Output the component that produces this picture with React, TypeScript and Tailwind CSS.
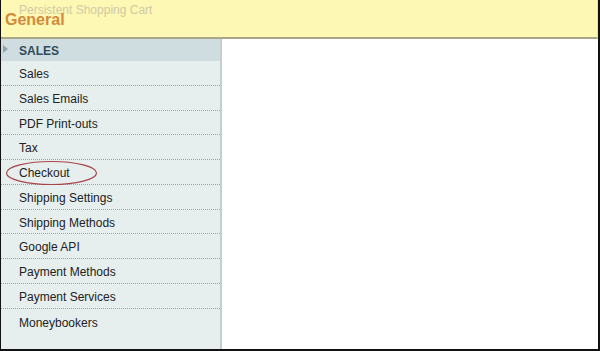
import React from 'react';

const items: [string, string][] = [
  ['Sales', 'h-[25px]'],
  ['Sales Emails', 'h-[25px]'],
  ['PDF Print-outs', 'h-[24px]'],
  ['Tax', 'h-[25px]'],
  ['Checkout', 'h-[25px]'],
  ['Shipping Settings', 'h-[25px]'],
  ['Shipping Methods', 'h-[24px]'],
  ['Google API', 'h-[25px]'],
  ['Payment Methods', 'h-[25px]'],
  ['Payment Services', 'h-[25px]'],
  ['Moneybookers', 'h-[25px]'],
];

export default function App() {
  return (
    <div className="w-[600px] h-[351px] overflow-hidden bg-white border-l border-r-2 border-b-2 border-l-[#111] border-r-[#111] border-b-[#111] flex flex-col text-[12px] text-[#222]" style={{ fontFamily: '"Liberation Sans", Arial, sans-serif' }}>
      <div className="relative h-[39px] shrink-0 bg-[#fdf8b3] border-b-2 border-[#a9a78a] border-r border-r-[#e8e3a8] pl-[4px] pt-[11px]">
        {/* faded title from the previous page, sitting behind "General" */}
        <span className="absolute left-[18px] top-[1px] text-[12px] text-[#cfcaa6]">Persistent Shopping Cart</span>
        <h1 className="relative text-[16px] leading-[18px] font-bold text-[#d48a3c]">General</h1>
      </div>
      <div className="flex flex-1 min-h-0">
        <div className="w-[221px] shrink-0 bg-[#e6eeee] border-r-2 border-[#c4cdd0]">
          <div className="h-[22px] bg-[#cfdde1] flex items-center gap-[11px] pl-[2px] pt-[1px]">
            <span className="w-0 h-0 mb-[4px] border-y-[4px] border-y-transparent border-l-[5px] border-l-[#8fa4aa]" />
            <span className="font-bold text-[12px] text-[#2f4b5a]">SALES</span>
          </div>
          {items.map(([it, h], i) => (
            <div key={it} className={'relative flex items-center pl-[18px] pt-[2px] ' + h + ' ' + (i < items.length - 1 ? 'border-b border-dotted border-[#9aa2a4]' : '')}>
              {it === 'Checkout' && (
                <svg className="absolute left-[4px] top-[0px]" width="93" height="26" viewBox="0 0 93 26">
                  <ellipse cx="46.5" cy="13" rx="45" ry="11.5" fill="none" stroke="#a8454a" strokeWidth="1.2" />
                </svg>
              )}
              <span className="relative">{it}</span>
            </div>
          ))}
        </div>
        <div className="flex-1 bg-white" />
      </div>
    </div>
  );
}
